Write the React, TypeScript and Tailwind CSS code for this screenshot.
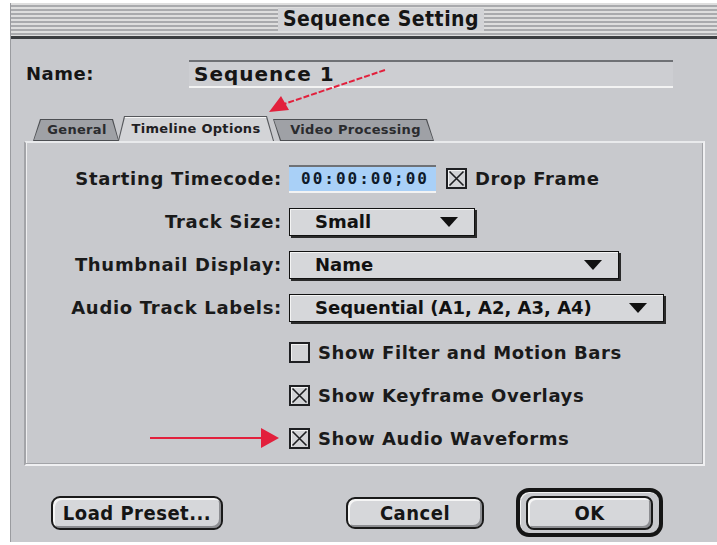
import React from 'react';

// Classic Mac OS dialog: Sequence Setting
const sysFont = "font-['DejaVu_Sans',sans-serif] font-bold";
const condFont = "font-['DejaVu_Sans_Condensed','DejaVu_Sans',sans-serif] font-bold";

function CheckBox({ on }: { on: boolean }) {
  return (
    <span className="flex h-[21px] w-[21px] shrink-0 items-center justify-center border-2 border-[#1e1f22] bg-[#d2d3d6] shadow-[inset_1px_1px_0_#f2f2f2]">
      {on && (
        <svg width="17" height="17" viewBox="0 0 17 17">
          <path d="M1.5 1.5L15.5 15.5M15.5 1.5L1.5 15.5" stroke="#1e1f22" strokeWidth="1.6" />
        </svg>
      )}
    </span>
  );
}

function Popup({ value, className }: { value: string; className: string }) {
  return (
    <div
      className={`flex h-[28px] items-center justify-between border border-[#111] bg-[#d6d7da] pl-[25px] pr-[16px] shadow-[2px_2px_0_#2a2a2a,inset_1px_1px_0_#f4f4f4] ${className}`}
    >
      <span className="text-[18px] leading-none text-[#111]">{value}</span>
      <svg width="18" height="10" viewBox="0 0 18 10">
        <path d="M0 0H18L9 10Z" fill="#111" />
      </svg>
    </div>
  );
}

function Row({ label, className = '', children }: { label?: string; className?: string; children: React.ReactNode }) {
  return (
    <div className={`flex h-[29px] items-center ${className}`}>
      <div className="w-[257px] pr-[1px] text-right text-[18px] leading-none tracking-[0.7px] text-[#1a1a1a]">{label}</div>
      <div className="ml-[6px] flex items-center">{children}</div>
    </div>
  );
}

function CheckRow({ on, label, className }: { on: boolean; label: string; className?: string }) {
  return (
    <Row className={className}>
      <CheckBox on={on} />
      <span className="ml-[8px] text-[18px] leading-none tracking-[0.6px] text-[#1a1a1a]">{label}</span>
    </Row>
  );
}

export default function App() {
  return (
    <div className="relative h-[545px] w-[717px] overflow-hidden bg-white pl-[10px] pt-[3px]">
      <div className={`flex h-[539px] flex-col border-l border-[#9a9b9f] bg-[#c8c9cd] ${sysFont}`}>
        {/* title bar */}
        <div className="flex h-[33px] items-center justify-center bg-[repeating-linear-gradient(180deg,#dedede_0px,#dedede_2px,#a9aaad_2px,#a9aaad_4px)] py-[5px] pl-[34px]">
          <div className="flex h-full items-center bg-[#d2d3d6] px-[5px]">
            <span className={`${condFont} text-[21px] leading-none tracking-[0.5px] text-[#151515]`}>Sequence Setting</span>
          </div>
        </div>
        <div className="h-[3px] bg-[#3a3d40]" />

        {/* name */}
        <div className="mt-[21px] flex h-[28px] items-center">
          <span className="ml-[15px] w-[163px] text-[18px] leading-none tracking-[0.5px] text-[#151515]">Name:</span>
          <div className="flex h-[28px] w-[484px] items-center border-t-2 border-b-2 border-t-[#6f7175] border-b-[#f3f3f3] bg-[#cdced2] pl-[5px]">
            <span className="text-[20px] leading-none tracking-[1px] text-[#151515]">Sequence 1</span>
          </div>
        </div>

        {/* tabs */}
        <div className="mt-[28px] flex h-[25px] items-end pl-[22px] text-[13px] tracking-[0.3px]">
          <div className="h-[22px] w-[86px] bg-[#4d4f53] p-[1px] [clip-path:polygon(7px_0,calc(100%_-_6px)_0,100%_100%,0_100%)]">
            <div className="flex h-full items-center justify-center bg-[#9fa1a6] pl-[2px] text-[#2a2b2e] [clip-path:polygon(7px_0,calc(100%_-_6px)_0,100%_100%,0_100%)]">
              General
            </div>
          </div>
          <div className="-ml-[1px] h-[25px] w-[156px] bg-[#55575b] p-[1px] pb-0 [clip-path:polygon(6px_0,calc(100%_-_7px)_0,100%_100%,0_100%)]">
            <div className="flex h-full items-center justify-center bg-[#d3d4d7] text-[#1f2023] shadow-[inset_0_1px_0_#f6f6f6] [clip-path:polygon(6px_0,calc(100%_-_7px)_0,100%_100%,0_100%)]">
              Timeline Options
            </div>
          </div>
          <div className="-ml-[1px] h-[22px] w-[161px] bg-[#4d4f53] p-[1px] [clip-path:polygon(0_0,calc(100%_-_7px)_0,100%_100%,7px_100%)]">
            <div className="flex h-full items-center justify-center bg-[#9fa1a6] pl-[4px] text-[#2a2b2e] [clip-path:polygon(0_0,calc(100%_-_7px)_0,100%_100%,7px_100%)]">
              Video Processing
            </div>
          </div>
        </div>

        {/* tab panel */}
        <div className="ml-[13px] mr-[12px] flex h-[325px] flex-col gap-[14px] border-2 border-t-[#e9eaec] border-l-[#a3a4a8] border-r-[#f0f0f2] border-b-[#f0f0f2] pt-[21px] shadow-[inset_-1px_-1px_0_#a3a4a8,inset_1px_0_0_#eeeeef]">
          <Row label="Starting Timecode:">
            <div className="flex h-[28px] w-[147px] items-center border-t-2 border-b-2 border-t-[#6f7175] border-b-[#f3f3f3] bg-[#a9d0f7] pl-[12px]">
              <span className="font-['DejaVu_Sans_Mono',monospace] text-[16px] leading-none tracking-[2px] text-[#0e1a2a]">
                00:00:00;00
              </span>
            </div>
            <span className="ml-[10px]">
              <CheckBox on />
            </span>
            <span className="ml-[8px] text-[18px] leading-none tracking-[0.6px] text-[#1a1a1a]">Drop Frame</span>
          </Row>
          <Row label="Track Size:">
            <Popup value="Small" className="w-[186px]" />
          </Row>
          <Row label="Thumbnail Display:">
            <Popup value="Name" className="w-[330px]" />
          </Row>
          <Row label="Audio Track Labels:">
            <Popup value="Sequential (A1, A2, A3, A4)" className="w-[375px]" />
          </Row>
          <CheckRow on={false} label="Show Filter and Motion Bars" className="mt-[2px]" />
          <CheckRow on label="Show Keyframe Overlays" />
          <CheckRow on label="Show Audio Waveforms" />
        </div>

        {/* buttons */}
        <div className={`mt-[22px] flex h-[49px] items-center ${condFont} text-[20px] tracking-[0.5px] text-[#151515]`}>
          <button className="ml-[40px] flex h-[34px] w-[172px] items-center justify-center rounded-[9px] border-2 border-[#1a1a1a] bg-[#d6d7da] leading-none shadow-[inset_2px_2px_0_#f5f5f5,inset_-2px_-2px_0_#8d8e92]">
            Load Preset...
          </button>
          <button className="ml-[123px] flex h-[32px] w-[138px] items-center justify-center rounded-[9px] border-2 border-[#1a1a1a] bg-[#d6d7da] leading-none shadow-[inset_2px_2px_0_#f5f5f5,inset_-2px_-2px_0_#8d8e92]">
            Cancel
          </button>
          <div className="ml-[32px] flex h-[49px] w-[147px] items-center justify-center rounded-[13px] border-[4px] border-[#151515] bg-[#c8c9cd] shadow-[inset_1px_1px_0_#f2f2f2]">
            <button className="flex h-[34px] w-[127px] items-center justify-center rounded-[8px] border-2 border-[#1a1a1a] bg-[#d6d7da] leading-none shadow-[inset_2px_2px_0_#f5f5f5,inset_-2px_-2px_0_#8d8e92]">
              OK
            </button>
          </div>
        </div>
      </div>

      {/* red annotation arrows */}
      <svg className="pointer-events-none absolute left-0 top-0" width="717" height="545" viewBox="0 0 717 545">
        <path d="M385 70L284 104" stroke="#e2203c" strokeWidth="2" strokeDasharray="6 2" />
        <path d="M269 112L281 96L289 110Z" fill="#e2203c" />
        <path d="M150 438H262" stroke="#e2203c" strokeWidth="2" />
        <path d="M261 428L279 438L261 448Z" fill="#e2203c" />
      </svg>
    </div>
  );
}
